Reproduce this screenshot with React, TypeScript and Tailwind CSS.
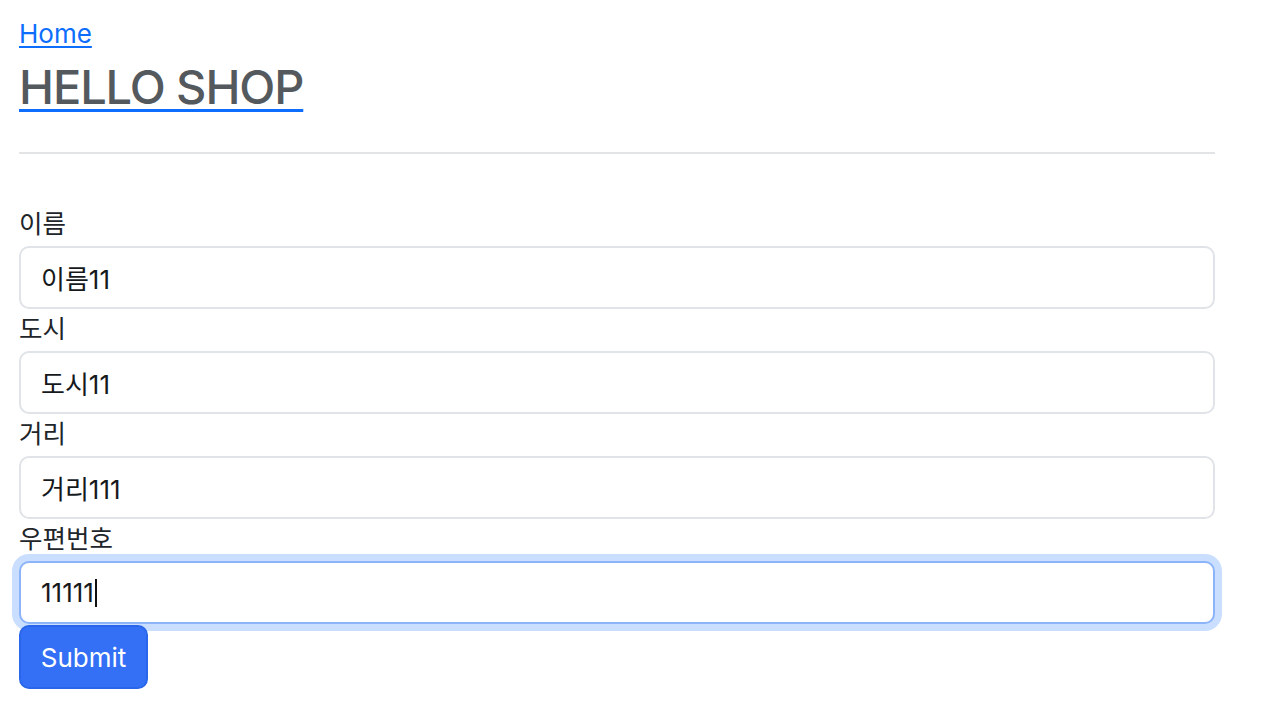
import React from "react";

const font = { fontFamily: '"Inter", "Noto Sans CJK KR", sans-serif' };

function Field({ label, value, focused }: { label: string; value: string; focused?: boolean }) {
  return (
    <div className="flex flex-col">
      <label className="h-[42px] flex items-end pb-[2px] text-[25.5px] leading-[40px] text-[#212529]">{label}</label>
      {focused ? (
        <div className="h-[63px] w-full rounded-[10px] border-2 border-[#8db4f8] bg-white pl-[20px] flex items-center text-[26px] text-[#16191c] shadow-[0_0_0_7px_rgba(13,110,253,0.22)]">
          <span>{value}</span>
          <span className="ml-[1px] inline-block h-[28px] w-[2px] bg-[#111]" />
        </div>
      ) : (
        <input
          readOnly
          defaultValue={value}
          className="h-[63px] w-full rounded-[10px] border-2 border-[#e0e3e7] bg-white pl-[20px] text-[26px] text-[#16191c] outline-none"
          style={font}
        />
      )}
    </div>
  );
}

export default function App() {
  return (
    <div className="min-h-[708px] bg-white" style={font}>
      <div className="ml-[19px] w-[1196px] pt-[14px]">
        <a href="#" className="block w-fit text-[26px] leading-[40px] text-[#0d6efd] underline decoration-[2px] underline-offset-[3px]">
          Home
        </a>
        <h1 className="mt-[4px] w-fit text-[47px] font-medium tracking-[-1.1px] leading-[58px] text-[#54595e] underline decoration-[#0d6efd] decoration-[3px] underline-offset-[5px]">
          HELLO SHOP
        </h1>
        <hr className="mt-[36px] border-0 border-t-2 border-[#e3e4e5]" />
        <form className="mt-[50px] flex flex-col">
          <Field label="이름" value="이름11" />
          <Field label="도시" value="도시11" />
          <Field label="거리" value="거리111" />
          <Field label="우편번호" value="11111" focused />
          <button
            type="button"
            className="mt-[1px] h-[64px] w-[129px] rounded-[10px] border-2 border-[#2a66ea] bg-[#3370f5] text-[26px] text-white"
          >
            Submit
          </button>
        </form>
      </div>
    </div>
  );
}
